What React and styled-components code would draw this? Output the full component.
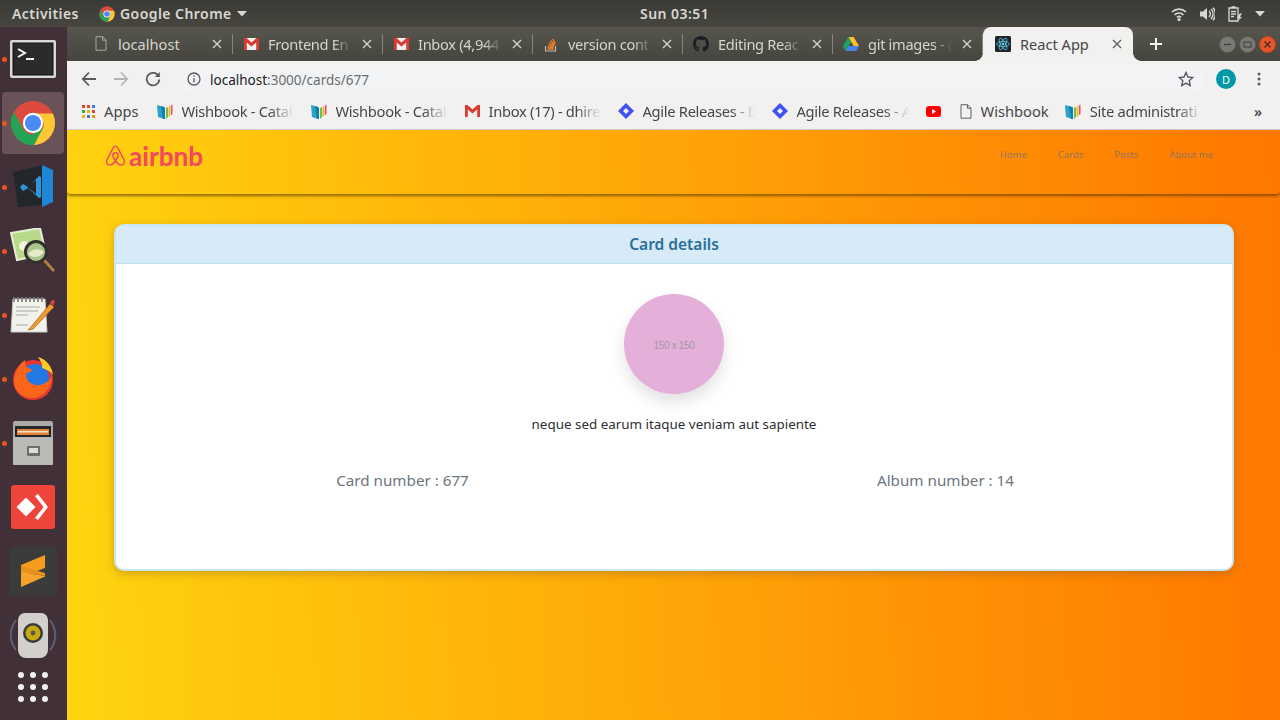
import React from "react";
import styled, { createGlobalStyle } from "styled-components";

const UI = `"Noto Sans", "Open Sans", sans-serif`;

const Global = createGlobalStyle`
  html, body { margin: 0; padding: 0; height: 100%; overflow: hidden; }
  body { font-family: ${UI}; background: #3c3b37; }
  #root { width: 1280px; height: 720px; }
  * { box-sizing: border-box; }
`;

const Desktop = styled.div`
  width: 1280px;
  height: 720px;
  display: flex;
  flex-direction: column;
`;

/* gnome top bar */
const TopBar = styled.header`
  height: 27px;
  flex: none;
  display: grid;
  grid-template-columns: 628px auto 1fr;
  align-items: center;
  padding: 0 15px 0 12px;
  background: linear-gradient(#3a3935, #48463f);
  color: #d8d8d2;
  font-size: 14px;
  font-weight: 600;
  letter-spacing: 0.45px;
`;
const TopLeft = styled.div`
  display: flex;
  align-items: center;
`;
const AppMenu = styled.div`
  display: flex;
  align-items: center;
  gap: 5px;
  margin-left: 20px;
`;
const TopRight = styled.div`
  display: flex;
  align-items: center;
  justify-content: flex-end;
  gap: 13px;
`;

const Main = styled.div`
  flex: 1;
  display: flex;
  min-height: 0;
`;

/* launcher on the left */
const Dock = styled.nav`
  width: 67px;
  flex: none;
  display: flex;
  flex-direction: column;
  align-items: flex-start;
  padding: 1px 0 0 2px;
  background: #423038;
`;
const DockItem = styled.div`
  position: relative;
  width: 62px;
  height: ${(p) => p.$h || 62}px;
  flex: none;
  margin-bottom: 2px;
  display: flex;
  align-items: center;
  justify-content: center;
  border-radius: 4px;
  background: ${(p) => (p.$active ? "#6a5358" : "transparent")};
  &::before {
    content: "";
    display: ${(p) => (p.$running ? "block" : "none")};
    position: absolute;
    left: 0;
    top: 29px;
    width: 5px;
    height: 5px;
    border-radius: 50%;
    background: #e95420;
  }
`;

const Browser = styled.div`
  flex: 1;
  min-width: 0;
  display: flex;
  flex-direction: column;
`;

const TabStrip = styled.div`
  height: 34px;
  flex: none;
  display: flex;
  align-items: stretch;
  padding-left: 16px;
  background: linear-gradient(#56554e, #45443e);
`;
const Tab = styled.div`
  position: relative;
  width: 150px;
  flex: none;
  display: flex;
  align-items: center;
  padding: 0 10px 1px ${(p) => (p.$active ? "12px" : "10px")};
  gap: 9px;
  font-size: 14.6px;
  color: ${(p) => (p.$active ? "#45474b" : "#d5d5d0")};
  background: ${(p) => (p.$active ? "#f2f1f0" : "transparent")};
  border-radius: ${(p) => (p.$active ? "8px 8px 0 0" : "0")};
  &::after {
    content: "";
    display: ${(p) => (p.$active ? "none" : "block")};
    position: absolute;
    right: 0;
    top: 7px;
    bottom: 7px;
    width: 1px;
    background: #85847d;
  }
`;
const TabFlare = styled.i`
  position: absolute;
  bottom: 0;
  width: 8px;
  height: 8px;
  ${(p) => (p.$right ? "right: -8px;" : "left: -8px;")}
  background: radial-gradient(
    circle at ${(p) => (p.$right ? "100% 0" : "0 0")},
    transparent 7.500px,
    #f2f1f0 8px
  );
`;
const TabIcon = styled.span`
  width: 16px;
  height: 16px;
  flex: none;
  display: flex;
  align-items: center;
  justify-content: center;
`;
const FadeLabel = styled.span`
  flex: 1;
  min-width: 0;
  white-space: nowrap;
  overflow: hidden;
  letter-spacing: ${(p) => (p.$fade ? "-0.3px" : "0")};
  -webkit-mask-image: ${(p) =>
    p.$fade ? "linear-gradient(to right, #000 78%, transparent 100%)" : "none"};
  mask-image: ${(p) =>
    p.$fade ? "linear-gradient(to right, #000 78%, transparent 100%)" : "none"};
`;
const TabClose = styled.span`
  width: 12px;
  flex: none;
  display: flex;
  justify-content: center;
`;
const NewTab = styled.div`
  width: 46px;
  flex: none;
  display: flex;
  align-items: center;
  justify-content: center;
`;
const WindowButtons = styled.div`
  margin-left: auto;
  padding-right: 4px;
  display: flex;
  align-items: center;
  gap: 3px;
`;
const WindowButton = styled.span`
  width: 17px;
  height: 17px;
  border-radius: 50%;
  display: flex;
  align-items: center;
  justify-content: center;
  background: ${(p) => (p.$close ? "#e9552a" : "#7a7973")};
  border: 1px solid ${(p) => (p.$close ? "#c4441f" : "#5b5a54")};
`;

const Toolbar = styled.div`
  height: 36px;
  flex: none;
  display: flex;
  align-items: center;
  padding: 0 0 0 12px;
  background: #f2f1f0;
`;
const NavButton = styled.span`
  width: 20px;
  height: 20px;
  margin-right: 12px;
  display: flex;
  align-items: center;
  justify-content: center;
`;
const Omnibox = styled.div`
  flex: 1;
  height: 30px;
  margin: 0 12px 0 2px;
  padding: 0 10px 0 10px;
  display: flex;
  align-items: center;
  gap: 9px;
  border-radius: 15px;
  background: #f1f3f4;
  font-size: 13.5px;
  color: #202124;
`;
const UrlText = styled.span`
  flex: 1;
  padding-top: 1px;
`;
const UrlRest = styled.span`
  color: #6a6d70;
`;
const Avatar = styled.span`
  width: 20px;
  height: 20px;
  border-radius: 50%;
  background: #0097a7;
  color: #fff;
  font-size: 11px;
  display: flex;
  align-items: center;
  justify-content: center;
`;
const MenuDots = styled.span`
  width: 20px;
  margin: 0 11px 0 13px;
  display: flex;
  justify-content: center;
`;

const Bookmarks = styled.div`
  height: 33px;
  flex: none;
  display: flex;
  align-items: center;
  padding: 0 0 4px 15px;
  background: #f2f1f0;
  border-bottom: 1px solid #cfcecc;
  font-size: 14.7px;
  color: #45474b;
`;
const Bookmark = styled.div`
  display: flex;
  align-items: center;
  gap: ${(p) => p.$gap || 9}px;
  margin-right: ${(p) => p.$mr ?? 17}px;
  flex: none;
`;
const BookmarkLabel = styled(FadeLabel)`
  flex: none;
  width: ${(p) => (p.$w ? `${p.$w}px` : "auto")};
`;
const More = styled.span`
  margin-left: auto;
  margin-right: 18px;
  font-size: 14px;
  font-weight: 600;
  color: #45474b;
`;

/* the app itself */
const Page = styled.main`
  flex: 1;
  min-height: 0;
  background: linear-gradient(87deg, #ffd40f 0%, #ff7700 100%);
`;
const AppBar = styled.div`
  height: 64px;
  display: flex;
  justify-content: space-between;
  padding: 0 50px 0 38px;
  border-radius: 0 0 4px 4px;
  box-shadow: 0 2px 3px rgba(70, 45, 0, 0.6);
`;
const Brand = styled.div`
  display: flex;
  align-items: center;
  gap: 3px;
  height: 51px;
  color: #f4485f;
  font-family: "Lato", sans-serif;
  font-size: 26.2px;
  font-weight: 700;
`;
const AppLinks = styled.ul`
  list-style: none;
  margin: 0;
  padding: 17px 17px 0 0;
  display: flex;
  gap: 31px;
  font-size: 9.5px;
  color: rgba(90, 110, 130, 0.7);
`;
const AppLink = styled.li`
  height: 16px;
  line-height: 16px;
`;
const CardWrap = styled.div`
  padding: 30px 46px 0 47px;
`;
const Card = styled.section`
  background: #fff;
  border: 2px solid #c9e6f2;
  border-radius: 10px;
  overflow: hidden;
  height: 347px;
  box-shadow: 0 3px 10px rgba(100, 70, 0, 0.3);
`;
const CardHead = styled.h2`
  margin: 0;
  height: 38px;
  line-height: 37px;
  text-align: center;
  font-size: 15.5px;
  font-weight: 600;
  color: #2a6f97;
  background: #d6eaf8;
  border-bottom: 1px solid #bfe0ee;
`;
const CardBody = styled.div`
  padding: 30px 15px 0;
  display: flex;
  flex-direction: column;
  align-items: center;
`;
const Thumb = styled.div`
  width: 100px;
  height: 100px;
  padding-top: 2px;
  border-radius: 50%;
  background: #e4b0d9;
  color: #9f98a0;
  font-family: "Liberation Sans", sans-serif;
  font-size: 10px;
  letter-spacing: -0.3px;
  display: flex;
  align-items: center;
  justify-content: center;
  box-shadow: 0 8px 16px rgba(0, 0, 0, 0.12);
`;
const CardTitle = styled.p`
  margin: 20px 0 0;
  font-size: 13.4px;
  line-height: 20px;
  color: #2b2f33;
`;
const MetaRow = styled.div`
  align-self: stretch;
  margin-top: 35px;
  display: grid;
  grid-template-columns: 1fr 1fr;
  text-align: center;
  font-size: 15.2px;
  line-height: 22px;
  color: #6c757d;
`;

/* ---- icons ---- */
const CloseIcon = ({ color = "#d5d5d0" }) => (
  <svg width="10" height="10" viewBox="0 0 10 10">
    <path d="M1 1l8 8M9 1l-8 8" stroke={color} strokeWidth="1.4" />
  </svg>
);
const FileIcon = ({ color = "#aaa9a3" }) => (
  <svg width="12" height="15" viewBox="0 0 12 15" fill="none">
    <path d="M1 .7h6.5L11 4.2v10H1zM7.5 .7v3.5H11" stroke={color} />
  </svg>
);
const GmailIcon = () => (
  <svg width="15" height="12" viewBox="0 0 15 12">
    <path d="M0 0h15v12H0z" fill="#f1f1f1" />
    <path d="M0 12V0h2.600L7.500 4.600 12.400 0H15v12h-2.800V4.600L7.500 8.600 2.800 4.600V12z" fill="#d93a32" />
  </svg>
);
const StackIcon = () => (
  <svg width="14" height="16" viewBox="0 0 14 16" fill="none">
    <path d="M1.500 10v5h10v-5" stroke="#bcbbb8" strokeWidth="1.200" />
    <path d="M3.500 13h6M3.600 11l6 .6M4 8.800l5.800 1.600M5 6.500l5.200 3M6.600 4.500l4 4.200M8.600 2.800l2.800 5" stroke="#f48024" strokeWidth="1.300" />
  </svg>
);
const GithubIcon = () => (
  <svg width="16" height="16" viewBox="0 0 16 16">
    <path
      fill="#1b1f23"
      d="M8 0C3.580 0 0 3.580 0 8c0 3.540 2.290 6.530 5.470 7.590.4.070.55-.17.55-.38 0-.19-.01-.82-.01-1.490-2.010.37-2.530-.49-2.690-.94-.09-.23-.48-.94-.82-1.130-.28-.15-.68-.52-.01-.53.63-.01 1.080.58 1.230.82.72 1.210 1.870.87 2.330.66.07-.52.28-.87.51-1.070-1.780-.2-3.640-.89-3.640-3.950 0-.87.31-1.590.82-2.150-.08-.2-.36-1.020.08-2.120 0 0 .67-.21 2.200.82.64-.18 1.320-.27 2-.27s1.360.09 2 .27c1.530-1.040 2.200-.82 2.200-.82.44 1.100.16 1.920.08 2.120.51.56.82 1.270.82 2.150 0 3.070-1.870 3.750-3.650 3.950.29.25.54.73.54 1.480 0 1.070-.01 1.930-.01 2.200 0 .21.15.46.55.38A8.010 8.010 0 0 0 16 8c0-4.420-3.580-8-8-8z"
    />
  </svg>
);
const DriveIcon = () => (
  <svg width="16" height="14" viewBox="0 0 16 14">
    <path d="M5.300 0h5.400l5.300 9h-5.400z" fill="#fbc02d" />
    <path d="M5.300 0L0 9l2.700 5 5.300-9z" fill="#1ea362" />
    <path d="M2.700 14h10.600L16 9H5.400z" fill="#4a80f0" />
  </svg>
);
const ReactIcon = ({ size = 16 }) => (
  <svg width={size} height={size} viewBox="0 0 16 16">
    <rect width="16" height="16" rx="1.500" fill="#20232a" />
    <g fill="none" stroke="#61dafb" strokeWidth=".7">
      <ellipse cx="8" cy="8" rx="6.400" ry="2.500" />
      <ellipse cx="8" cy="8" rx="6.400" ry="2.500" transform="rotate(60 8 8)" />
      <ellipse cx="8" cy="8" rx="6.400" ry="2.500" transform="rotate(120 8 8)" />
    </g>
    <circle cx="8" cy="8" r="1.300" fill="#61dafb" />
  </svg>
);
const ChromeIcon = ({ size = 16 }) => (
  <svg width={size} height={size} viewBox="0 0 48 48">
    <circle cx="24" cy="24" r="23" fill="#dd4b3e" />
    <path d="M24 14h20.600A23 23 0 0 1 25 47L35 28a12 12 0 0 0-11-14z" fill="#fcc934" />
    <path d="M4.200 12.500A23 23 0 0 0 25 47l10-19-11 8a12 12 0 0 1-10.400-6z" fill="#23a455" />
    <circle cx="24" cy="24" r="10.600" fill="#fff" />
    <circle cx="24" cy="24" r="8.400" fill="#4a8af4" />
  </svg>
);
const AppsIcon = () => (
  <svg width="13" height="13" viewBox="0 0 13 13">
    {["#e0453a", "#e0453a", "#3b78e7", "#34a853", "#f4b400", "#e0453a", "#f4b400", "#3b78e7", "#f09300"].map((c, i) => (
      <rect key={i} x={(i % 3) * 5} y={Math.floor(i / 3) * 5} width="3" height="3" fill={c} />
    ))}
  </svg>
);
const WishbookIcon = () => (
  <svg width="16" height="15" viewBox="0 0 16 15">
    <path d="M0 1l7 2v12l-6-2z" fill="#29a3c9" />
    <path d="M4 2l4 1.400V15H6z" fill="#137fa8" />
    <path d="M9 4l2-1v10l-2 2z" fill="#6fbf4a" />
    <path d="M11.500 3l2-1.500v10l-2 1.500z" fill="#f2b632" />
    <path d="M14 1.500l1.500-1v9.500l-1.500 1z" fill="#e0506a" />
  </svg>
);
const JiraIcon = () => (
  <svg width="16" height="16" viewBox="0 0 16 16">
    <path d="M8 0l8 8-8 8-8-8z" fill="#3f51f4" />
    <path d="M8 5l3 3-3 3-3-3z" fill="#f2f1f0" />
  </svg>
);
const YoutubeIcon = () => (
  <svg width="15" height="11" viewBox="0 0 15 11">
    <rect width="15" height="11" rx="3" fill="#f00" />
    <path d="M6 3l4 2.500L6 8z" fill="#fff" />
  </svg>
);
const AirbnbMark = () => (
  <svg width="21" height="21" viewBox="0 0 21 21" fill="none" stroke="#f4485f" strokeWidth="1.500">
    <path d="M10.500 1.200c-1 0-1.800.7-2.300 1.700C6.200 6.900 3.600 11.600 1.900 15c-1.300 2.900.6 5 2.900 5 2.100 0 4-1.800 5.700-4.200 1.700 2.400 3.600 4.200 5.700 4.200 2.300 0 4.200-2.100 2.900-5-1.700-3.400-4.300-8.100-6.300-12.100-.5-1-1.300-1.700-2.300-1.700z" />
    <path d="M10.500 15.800c-1.500-2-2.700-4.100-2.700-5.500 0-1.600 1.200-2.600 2.700-2.600s2.700 1 2.700 2.600c0 1.400-1.200 3.500-2.700 5.500z" />
  </svg>
);
const Caret = ({ color = "#d8d8d2" }) => (
  <svg width="10" height="6" viewBox="0 0 10 6">
    <path d="M0 0h10L5 5.500z" fill={color} />
  </svg>
);

/* dock pictures */
const TerminalApp = () => (
  <svg width="46" height="38" viewBox="0 0 46 38">
    <rect width="46" height="38" rx="2" fill="#d9d9d6" />
    <rect x="3" y="3" width="40" height="32" fill="#2b2b2b" stroke="#111" />
    <path d="M8 9l7 4-7 4" fill="none" stroke="#f4f4f4" strokeWidth="2" />
    <path d="M16 19h8" stroke="#f4f4f4" strokeWidth="2" />
  </svg>
);
const VscodeApp = () => (
  <svg width="42" height="44" viewBox="0 0 42 44">
    <path d="M1 7l30-7v40L6 42z" fill="#23272c" />
    <path d="M30 0l11 5v32l-11 5z" fill="#1e88d6" />
    <path d="M8 22l3-3 5 3 11-11 2 1v20l-2 1-11-10-5 3z" fill="#2f96de" />
    <path d="M15 22l9-7v14z" fill="#23272c" />
  </svg>
);
const ViewerApp = () => (
  <svg width="46" height="46" viewBox="0 0 46 46">
    <path d="M1 5l29-5 6 26-29 6z" fill="#b9d98a" stroke="#e9ecd8" strokeWidth="2" />
    <circle cx="14" cy="18" r="5" fill="#f3f2dc" />
    <path d="M35 31l10 11-2 2-10-11z" fill="#b5803f" />
    <circle cx="26" cy="24" r="10.500" fill="#a9c58a" stroke="#33302f" strokeWidth="3" />
    <path d="M18 26c4-6 12-6 16-2-3 5-12 7-16 2z" fill="#e6eac8" />
  </svg>
);
const EditorApp = () => (
  <svg width="46" height="40" viewBox="0 0 46 40">
    <path d="M3 4h32l2 33H1z" fill="#f2f2ec" stroke="#c9c9c4" />
    <path d="M4 2v5M8 2v5M12 2v5M16 2v5M20 2v5M24 2v5M28 2v5M32 2v5" stroke="#7a7a78" strokeWidth="1.600" />
    <path d="M6 12h24M6 16h22M6 20h12M6 30h12" stroke="#a8a8a5" />
    <path d="M20 33l20-24 4 3-21 22-5 1z" fill="#f09b2c" stroke="#a75f18" strokeWidth=".7" />
    <path d="M40 8l2-3c1.500-1 3.500 1 2.500 2.500L43 11z" fill="#d8443c" />
  </svg>
);
const FirefoxApp = () => (
  <svg width="44" height="44" viewBox="0 0 44 44">
    <circle cx="22" cy="23" r="20" fill="#e8372f" />
    <circle cx="24" cy="21" r="14" fill="#2378e5" />
    <path d="M3 24C4 12 10 6 14 3l1 7 7 3-7 4c0 7 6 12 14 11 5-.8 10-5 12-9-1 15-11 22-20 22C10 41 3 33 3 24z" fill="#f8651b" />
    <path d="M27 0c8 2 14 9 15 18-3-4-7-6-11-7 1-4-2-8-4-11z" fill="#ffcb22" />
  </svg>
);
const FilesApp = () => (
  <svg width="42" height="44" viewBox="0 0 42 44">
    <rect x="1" y="0" width="40" height="44" rx="2" fill="#a9a9a6" />
    <rect x="3" y="5" width="36" height="11" fill="#27262a" />
    <rect x="5" y="8" width="32" height="6" fill="#e2833a" />
    <rect x="6" y="10" width="30" height="1.500" fill="#f1e3cb" />
    <rect x="1" y="16" width="40" height="28" rx="1" fill="#b9b9b6" />
    <rect x="15" y="25" width="13" height="10" rx="1" fill="#6d6d6a" />
    <rect x="17" y="27" width="9" height="5" fill="#dcdcd9" />
  </svg>
);
const AnydeskApp = () => (
  <svg width="44" height="44" viewBox="0 0 44 44">
    <rect width="44" height="44" rx="3" fill="#ef443b" />
    <path d="M15 12.500l9.500 9.500-9.500 9.500L5.500 22z" fill="#fff" />
    <path d="M24 11l3-2 10 13-10 13-3-2 8.500-11z" fill="#fff" />
  </svg>
);
const SublimeApp = () => (
  <svg width="48" height="48" viewBox="0 0 48 48">
    <rect width="48" height="48" rx="3" fill="#3b3b3b" />
    <path d="M12 18L36 8v13L12 30z" fill="#f59c1c" />
    <path d="M12 25l24 4v.5L12 40z" fill="#f7a52a" />
    <path d="M12 19l24 7v3L12 25z" fill="#e8921a" />
  </svg>
);
const SpeakerApp = () => (
  <svg width="48" height="46" viewBox="0 0 48 46">
    <path d="M7 8a24 24 0 0 0 0 30M41 8a24 24 0 0 1 0 30" fill="none" stroke="#5a5f78" strokeWidth="2" />
    <path d="M9 8a7 7 0 0 1 7-7h16a7 7 0 0 1 7 7v30a8 8 0 0 1-8 8H17a8 8 0 0 1-8-8z" fill="#d2d0cd" />
    <circle cx="24" cy="21" r="10" fill="#3a3a3a" />
    <circle cx="24" cy="21" r="7.500" fill="#c6a80f" />
    <circle cx="24" cy="21" r="2.400" fill="#555" />
  </svg>
);
const GridApp = () => (
  <svg width="30" height="30" viewBox="0 0 30 30" fill="#f1f1f1">
    {[3, 15, 27].flatMap((y) =>
      [3, 15, 27].map((x) => <circle key={`${x}-${y}`} cx={x} cy={y} r="3" />)
    )}
  </svg>
);

const tabs = [
  { icon: <FileIcon />, label: "localhost", fade: false },
  { icon: <GmailIcon />, label: "Frontend En", fade: true },
  { icon: <GmailIcon />, label: "Inbox (4,944", fade: true },
  { icon: <StackIcon />, label: "version cont", fade: true },
  { icon: <GithubIcon />, label: "Editing Reac", fade: true },
  { icon: <DriveIcon />, label: "git images - (", fade: true },
];

const dock = [
  { el: <TerminalApp />, running: true },
  { el: <ChromeIcon size={46} />, running: true, active: true },
  { el: <VscodeApp />, running: true },
  { el: <ViewerApp />, running: true },
  { el: <EditorApp />, running: true },
  { el: <FirefoxApp />, running: true },
  { el: <FilesApp />, running: true },
  { el: <AnydeskApp /> },
  { el: <SublimeApp /> },
  { el: <SpeakerApp /> },
  { el: <GridApp />, h: 38 },
];

const marks = [
  { icon: <WishbookIcon />, label: "Wishbook - Catal" },
  { icon: <WishbookIcon />, label: "Wishbook - Catal" },
  { icon: <GmailIcon />, label: "Inbox (17) - dhire" },
  { icon: <JiraIcon />, label: "Agile Releases - b" },
  { icon: <JiraIcon />, label: "Agile Releases - A" },
];

export default function App() {
  return (
    <Desktop>
      <Global />
      <TopBar>
        <TopLeft>
          Activities
          <AppMenu>
            <ChromeIcon />
            Google Chrome
            <Caret />
          </AppMenu>
        </TopLeft>
        <span>Sun 03:51</span>
        <TopRight>
          <svg width="16" height="14" viewBox="0 0 16 14" fill="none" stroke="#d8d8d2" strokeWidth="1.600">
            <path d="M1 5a10 10 0 0 1 14 0M3.500 7.800a6.500 6.500 0 0 1 9 0M6 10.300a3 3 0 0 1 4 0" />
            <circle cx="8" cy="12.500" r=".8" fill="#d8d8d2" />
          </svg>
          <svg width="15" height="14" viewBox="0 0 15 14" fill="none" stroke="#d8d8d2" strokeWidth="1.400">
            <path d="M0 4.500h3L7 1v12L3 9.500H0z" fill="#d8d8d2" stroke="none" />
            <path d="M9 4a4 4 0 0 1 0 6M11 2a7 7 0 0 1 0 10M13 .7a9.500 9.500 0 0 1 0 12.600" />
          </svg>
          <svg width="14" height="16" viewBox="0 0 14 16" fill="none" stroke="#d8d8d2" strokeWidth="1.300">
            <path d="M1 2h9v13H1zM4 .8h3v1.200H4zM3 5.500h5M3 8h5M3 10.500h3" />
            <path d="M11 8l3-1-2 4h2l-4 4 1-3H9z" fill="#d8d8d2" stroke="none" />
          </svg>
          <Caret />
        </TopRight>
      </TopBar>
      <Main>
        <Dock>
          {dock.map((d, i) => (
            <DockItem key={i} $running={d.running} $active={d.active} $h={d.h}>
              {d.el}
            </DockItem>
          ))}
        </Dock>
        <Browser>
          <TabStrip>
            {tabs.map((t) => (
              <Tab key={t.label}>
                <TabIcon>{t.icon}</TabIcon>
                <FadeLabel $fade={t.fade}>{t.label}</FadeLabel>
                <TabClose>
                  <CloseIcon />
                </TabClose>
              </Tab>
            ))}
            <Tab $active>
              <TabFlare />
              <TabIcon>
                <ReactIcon />
              </TabIcon>
              <FadeLabel>React App</FadeLabel>
              <TabClose>
                <CloseIcon color="#5f6164" />
              </TabClose>
              <TabFlare $right />
            </Tab>
            <NewTab>
              <svg width="12" height="12" viewBox="0 0 12 12">
                <path d="M6 0v12M0 6h12" stroke="#f2f1f0" strokeWidth="2" />
              </svg>
            </NewTab>
            <WindowButtons>
              <WindowButton>
                <svg width="9" height="9" viewBox="0 0 9 9">
                  <path d="M1 4.500h7" stroke="#3c3b37" strokeWidth="1.200" />
                </svg>
              </WindowButton>
              <WindowButton>
                <svg width="9" height="9" viewBox="0 0 9 9">
                  <rect x="1" y="2" width="7" height="5" fill="none" stroke="#3c3b37" />
                </svg>
              </WindowButton>
              <WindowButton $close>
                <svg width="9" height="9" viewBox="0 0 9 9">
                  <path d="M1.500 1.500l6 6M7.500 1.500l-6 6" stroke="#43261c" strokeWidth="1.200" />
                </svg>
              </WindowButton>
            </WindowButtons>
          </TabStrip>
          <Toolbar>
            <NavButton>
              <svg width="16" height="16" viewBox="0 0 16 16" fill="none" stroke="#5a5b5e" strokeWidth="1.800">
                <path d="M15 8H2M8 1.500L1.800 8 8 14.500" />
              </svg>
            </NavButton>
            <NavButton>
              <svg width="16" height="16" viewBox="0 0 16 16" fill="none" stroke="#b4b5b7" strokeWidth="1.800">
                <path d="M1 8h13M8 1.500L14.200 8 8 14.500" />
              </svg>
            </NavButton>
            <NavButton>
              <svg width="16" height="16" viewBox="0 0 16 16" fill="none" stroke="#5a5b5e" strokeWidth="1.800">
                <path d="M13.500 5A6.300 6.300 0 1 0 14.300 8.500" />
                <path d="M14.800 1v5h-5z" fill="#5a5b5e" stroke="none" />
              </svg>
            </NavButton>
            <Omnibox>
              <svg width="14" height="14" viewBox="0 0 14 14" fill="none" stroke="#5a5b5e" strokeWidth="1.300">
                <circle cx="7" cy="7" r="6" />
                <path d="M7 6v4.500M7 3.200v1.500" />
              </svg>
              <UrlText>
                localhost<UrlRest>:3000/cards/677</UrlRest>
              </UrlText>
              <svg width="16" height="16" viewBox="0 0 16 16" fill="none" stroke="#5a5b5e" strokeWidth="1.400">
                <path d="M8 1.500l2 4.500 4.800.5-3.600 3.200 1 4.800L8 12.100 3.800 14.500l1-4.800L1.200 6.500 6 6z" />
              </svg>
            </Omnibox>
            <Avatar>D</Avatar>
            <MenuDots>
              <svg width="4" height="14" viewBox="0 0 4 14" fill="#5a5b5e">
                <circle cx="2" cy="2" r="1.500" />
                <circle cx="2" cy="7" r="1.500" />
                <circle cx="2" cy="12" r="1.500" />
              </svg>
            </MenuDots>
          </Toolbar>
          <Bookmarks>
            <Bookmark $mr={18}>
              <AppsIcon />
              <BookmarkLabel>Apps</BookmarkLabel>
            </Bookmark>
            {marks.map((m, i) => (
              <Bookmark key={i}>
                {m.icon}
                <BookmarkLabel $fade $w={112}>{m.label}</BookmarkLabel>
              </Bookmark>
            ))}
            <Bookmark $mr={19}>
              <YoutubeIcon />
            </Bookmark>
            <Bookmark $mr={16}>
              <FileIcon color="#5f6164" />
              <BookmarkLabel>Wishbook</BookmarkLabel>
            </Bookmark>
            <Bookmark $mr={0}>
              <WishbookIcon />
              <BookmarkLabel $fade $w={112}>Site administrati</BookmarkLabel>
            </Bookmark>
            <More>»</More>
          </Bookmarks>
          <Page>
            <AppBar>
              <Brand>
                <AirbnbMark />
                airbnb
              </Brand>
              <AppLinks>
                <AppLink>Home</AppLink>
                <AppLink>Cards</AppLink>
                <AppLink>Posts</AppLink>
                <AppLink>About me</AppLink>
              </AppLinks>
            </AppBar>
            <CardWrap>
              <Card>
                <CardHead>Card details</CardHead>
                <CardBody>
                  <Thumb>150 x 150</Thumb>
                  <CardTitle>neque sed earum itaque veniam aut sapiente</CardTitle>
                  <MetaRow>
                    <span>Card number : 677</span>
                    <span>Album number : 14</span>
                  </MetaRow>
                </CardBody>
              </Card>
            </CardWrap>
          </Page>
        </Browser>
      </Main>
    </Desktop>
  );
}
